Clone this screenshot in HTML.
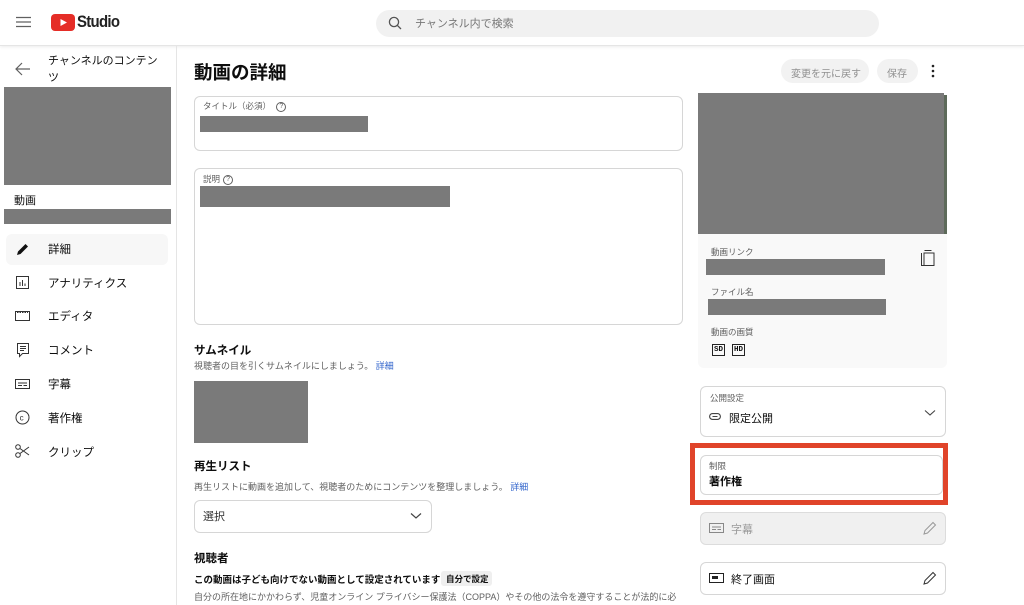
<!DOCTYPE html>
<html><head><meta charset="utf-8"><style>
*{box-sizing:border-box;margin:0;padding:0}
body{width:1024px;height:605px;overflow:hidden;background:#fff;font-family:"Liberation Sans","Noto Sans CJK JP",sans-serif;color:#0d0d0d;position:relative}
.a{position:absolute}
.g{position:absolute;background:#7a7a7a}
.t{position:absolute;white-space:nowrap}
.box{position:absolute;border:1px solid #d6d6d6;border-radius:6px;background:#fff}
.nav{position:absolute;left:48px;font-size:11.5px;color:#0d0d0d}
.lbl{font-size:8.5px;color:#606060}
.q{display:inline-block;width:10px;height:10px;border:1px solid #606060;border-radius:50%;font-size:7px;line-height:8px;text-align:center;vertical-align:middle;margin-left:3px}
</style></head><body>
<!-- header -->
<div class="a" style="left:0;top:0;width:1024px;height:46px;background:#fff;border-bottom:1px solid #e5e5e5;box-shadow:0 1px 3px rgba(0,0,0,.08)"></div>
<svg class="a" style="left:16px;top:16px" width="15" height="12"><path d="M0 1.5H15M0 6H15M0 10.5H15" stroke="#606060" stroke-width="1.3"/></svg>
<svg class="a" style="left:51px;top:14px" width="24" height="17"><rect width="24" height="17" rx="4" fill="#e52d27"/><path d="M9.5 5 L16 8.5 L9.5 12Z" fill="#fff"/></svg>
<div class="t" style="left:77px;top:12px;font-size:17px;font-weight:bold;letter-spacing:-0.8px;color:#222;transform:scaleX(.88);transform-origin:left">Studio</div>
<div class="a" style="left:376px;top:10px;width:503px;height:27px;border-radius:14px;background:#f1f1f1"></div>
<svg class="a" style="left:388px;top:16px" width="14" height="14"><circle cx="6" cy="6" r="4.6" fill="none" stroke="#555" stroke-width="1.3"/><path d="M9.4 9.4L13 13" stroke="#555" stroke-width="1.3"/></svg>
<div class="t" style="left:415px;top:15px;font-size:11px;color:#777">チャンネル内で検索</div>

<!-- sidebar -->
<div class="a" style="left:176px;top:46px;width:1px;height:559px;background:#e5e5e5"></div>
<svg class="a" style="left:15px;top:62px" width="16" height="14"><path d="M15 7H1M7 1L1 7L7 13" fill="none" stroke="#606060" stroke-width="1.2"/></svg>
<div class="t" style="left:48px;top:53px;font-size:11px;line-height:17px;color:#0d0d0d">チャンネルのコンテン<br>ツ</div>
<div class="g" style="left:4px;top:87px;width:167px;height:98px"></div>
<div class="t" style="left:14px;top:192px;font-size:11px">動画</div>
<div class="g" style="left:4px;top:209px;width:167px;height:15px"></div>
<div class="a" style="left:6px;top:234px;width:162px;height:31px;border-radius:6px;background:#f7f7f7"></div>
<svg class="a" style="left:16px;top:242px" width="14" height="14"><path d="M1 13L2 9.5L9.5 2L12 4.5L4.5 12Z" fill="#111"/></svg>
<div class="nav" style="top:241px">詳細</div>
<svg class="a" style="left:16px;top:276px" width="13" height="13"><rect x=".5" y=".5" width="12" height="12" fill="none" stroke="#333"/><path d="M4 10V6M6.5 10V4M9 10V7.5" stroke="#333"/></svg>
<div class="nav" style="top:275px">アナリティクス</div>
<svg class="a" style="left:15px;top:311px" width="15" height="10"><rect x=".5" y=".5" width="14" height="9" fill="none" stroke="#333"/><path d="M2 1.5H13" stroke="#333" stroke-dasharray="1.5 1"/></svg>
<div class="nav" style="top:308px">エディタ</div>
<svg class="a" style="left:17px;top:343px" width="12" height="15"><path d="M.5 .5H11.5V10.5H5.5L2.5 13.5V10.5H.5Z" fill="none" stroke="#333"/><path d="M3 3.5H9M3 5.5H9M3 7.5H7" stroke="#333"/></svg>
<div class="nav" style="top:342px">コメント</div>
<svg class="a" style="left:15px;top:379px" width="15" height="10"><rect x=".5" y=".5" width="14" height="9" fill="none" stroke="#333"/><path d="M3 4H12M3 6.5H7M8.5 6.5H12" stroke="#333"/></svg>
<div class="nav" style="top:376px">字幕</div>
<svg class="a" style="left:15px;top:410px" width="15" height="15"><circle cx="7.5" cy="7.5" r="6.5" fill="none" stroke="#333"/><text x="4.6" y="10.4" font-size="8" font-family="Liberation Sans" fill="#333">c</text></svg>
<div class="nav" style="top:410px">著作権</div>
<svg class="a" style="left:15px;top:444px" width="15" height="14"><circle cx="3" cy="3" r="2.3" fill="none" stroke="#333"/><circle cx="3" cy="11" r="2.3" fill="none" stroke="#333"/><path d="M5 4.5L14 11M5 9.5L14 3" stroke="#333"/></svg>
<div class="nav" style="top:444px">クリップ</div>

<!-- main -->
<div class="t" style="left:194px;top:59px;font-size:18.5px;font-weight:bold">動画の詳細</div>
<div class="box" style="left:194px;top:96px;width:489px;height:55px"></div>
<div class="t lbl" style="left:203px;top:100px">タイトル（必須） <span class="q">?</span></div>
<div class="g" style="left:200px;top:116px;width:168px;height:16px"></div>
<div class="box" style="left:194px;top:168px;width:489px;height:157px"></div>
<div class="t lbl" style="left:203px;top:173px">説明<span class="q">?</span></div>
<div class="g" style="left:200px;top:186px;width:250px;height:21px"></div>
<div class="t" style="left:194px;top:342px;font-size:11.5px;font-weight:bold">サムネイル</div>
<div class="t" style="left:194px;top:359px;font-size:9px;color:#606060">視聴者の目を引くサムネイルにしましょう。 <span style="color:#3366cc">詳細</span></div>
<div class="g" style="left:194px;top:381px;width:114px;height:62px"></div>
<div class="t" style="left:194px;top:458px;font-size:11.5px;font-weight:bold">再生リスト</div>
<div class="t" style="left:194px;top:480px;font-size:9px;color:#606060">再生リストに動画を追加して、視聴者のためにコンテンツを整理しましょう。 <span style="color:#3366cc">詳細</span></div>
<div class="box" style="left:194px;top:500px;width:238px;height:33px"></div>
<div class="t" style="left:203px;top:508px;font-size:11px;color:#333">選択</div>
<svg class="a" style="left:410px;top:512px" width="12" height="8"><path d="M1 1.5L6 6L11 1.5" fill="none" stroke="#444" stroke-width="1.2"/></svg>
<div class="t" style="left:194px;top:550px;font-size:11.5px;font-weight:bold">視聴者</div>
<div class="t" style="left:194px;top:572px;font-size:9.5px;font-weight:bold">この動画は子ども向けでない動画として設定されています</div>
<div class="a" style="left:441px;top:571px;width:51px;height:15px;background:#efefef;border-radius:3px"></div>
<div class="t" style="left:446px;top:573px;font-size:8.5px;font-weight:bold">自分で設定</div>
<div class="t" style="left:194px;top:590px;font-size:9px;color:#606060">自分の所在地にかかわらず、児童オンライン プライバシー保護法（COPPA）やその他の法令を遵守することが法的に必</div>

<!-- right -->
<div class="a" style="left:781px;top:59px;width:88px;height:24px;border-radius:12px;background:#f2f2f2"></div>
<div class="t" style="left:791px;top:65px;font-size:10px;color:#909090">変更を元に戻す</div>
<div class="a" style="left:877px;top:59px;width:41px;height:24px;border-radius:12px;background:#f2f2f2"></div>
<div class="t" style="left:887px;top:65px;font-size:10px;color:#909090">保存</div>
<svg class="a" style="left:931px;top:64px" width="4" height="14"><circle cx="2" cy="2" r="1.3" fill="#222"/><circle cx="2" cy="7" r="1.3" fill="#222"/><circle cx="2" cy="12" r="1.3" fill="#222"/></svg>
<div class="a" style="left:698px;top:234px;width:249px;height:134px;background:#f9f9f9;border-radius:0 0 6px 6px"></div>
<div class="g" style="left:698px;top:93px;width:246px;height:141px"></div>
<div class="a" style="left:944px;top:95px;width:3px;height:139px;background:#5d6a5a"></div>
<div class="t lbl" style="left:711px;top:246px">動画リンク</div>
<div class="g" style="left:706px;top:259px;width:179px;height:16px"></div>
<svg class="a" style="left:921px;top:250px" width="14" height="16"><path d="M3.5 .5H10.5M.5 3V15.5H10" fill="none" stroke="#333"/><rect x="3" y="3" width="10" height="12.5" fill="none" stroke="#333"/></svg>
<div class="t lbl" style="left:711px;top:286px">ファイル名</div>
<div class="g" style="left:708px;top:299px;width:178px;height:16px"></div>
<div class="t lbl" style="left:711px;top:326px">動画の画質</div>
<div class="t" style="left:712px;top:344px;font-size:7.5px;font-weight:bold;border:1px solid #222;padding:0 1px;line-height:10px;font-family:'Liberation Mono',monospace">SD</div>
<div class="t" style="left:732px;top:344px;font-size:7.5px;font-weight:bold;border:1px solid #222;padding:0 1px;line-height:10px;font-family:'Liberation Mono',monospace">HD</div>

<div class="box" style="left:700px;top:386px;width:246px;height:51px"></div>
<div class="t lbl" style="left:710px;top:392px">公開設定</div>
<svg class="a" style="left:709px;top:413px" width="12" height="7"><rect x=".6" y=".6" width="10.8" height="5.8" rx="2.9" fill="none" stroke="#444" stroke-width="1.1"/><path d="M3.5 3.5H8.5" stroke="#444"/></svg>
<div class="t" style="left:729px;top:410px;font-size:11px">限定公開</div>
<svg class="a" style="left:924px;top:409px" width="12" height="8"><path d="M1 1.5L6 6L11 1.5" fill="none" stroke="#444" stroke-width="1.1"/></svg>

<div class="a" style="left:690px;top:443px;width:258px;height:62px;border:5px solid #e0442a"></div>
<div class="box" style="left:700px;top:455px;width:243px;height:40px"></div>
<div class="t lbl" style="left:709px;top:460px">制限</div>
<div class="t" style="left:709px;top:473px;font-size:11px;font-weight:bold">著作権</div>

<div class="a" style="left:700px;top:512px;width:246px;height:33px;border:1px solid #dcdcdc;border-radius:6px;background:#f0f0f0"></div>
<svg class="a" style="left:709px;top:523px" width="15" height="10"><rect x=".5" y=".5" width="14" height="9" fill="none" stroke="#888"/><path d="M3 4H12M3 6.5H7M8.5 6.5H12" stroke="#888"/></svg>
<div class="t" style="left:731px;top:521px;font-size:11px;color:#999">字幕</div>
<svg class="a" style="left:923px;top:521px" width="14" height="14"><path d="M1 13L2 9.5L10 1.5L12.5 4L4.5 12Z" fill="none" stroke="#999"/></svg>

<div class="box" style="left:700px;top:562px;width:246px;height:33px"></div>
<svg class="a" style="left:709px;top:573px" width="15" height="10"><rect x=".5" y=".5" width="14" height="9" fill="none" stroke="#222"/><rect x="3" y="3" width="6" height="3" fill="#222"/></svg>
<div class="t" style="left:731px;top:571px;font-size:11px">終了画面</div>
<svg class="a" style="left:923px;top:571px" width="14" height="14"><path d="M1 13L2 9.5L10 1.5L12.5 4L4.5 12Z" fill="none" stroke="#333"/></svg>
</body></html>
